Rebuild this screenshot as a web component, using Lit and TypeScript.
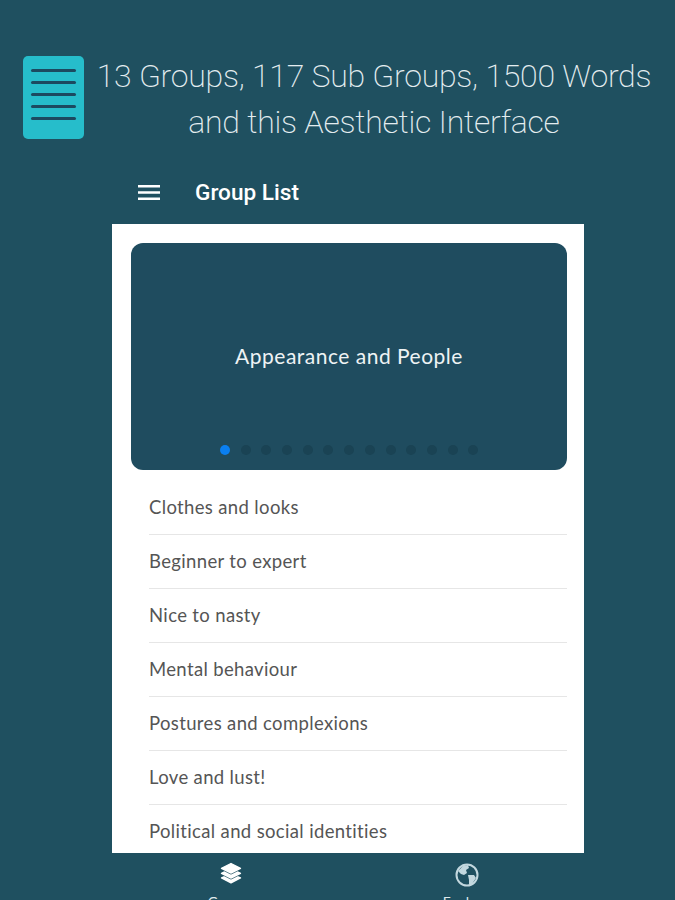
import { LitElement, html, css } from "lit";
import { customElement } from "lit/decorators.js";

const ROWS = [
  "Clothes and looks",
  "Beginner to expert",
  "Nice to nasty",
  "Mental behaviour",
  "Postures and complexions",
  "Love and lust!",
  "Political and social identities",
];

@customElement("app-root")
export class AppRoot extends LitElement {
  static styles = css`
    :host { display: block; }
    .page {
      height: 900px; overflow: hidden; background: #1f5060;
      display: flex; flex-direction: column;
    }
    .promo {
      display: flex; align-items: flex-start;
      padding: 53px 0 0 23px; height: 165px; box-sizing: border-box; flex: none;
    }
    .doc {
      width: 61px; height: 83px; margin-top: 3px; flex: none; border-radius: 5px;
      background: #26bdcb; display: flex; flex-direction: column; gap: 9px;
      padding: 13px 8px 0; box-sizing: border-box;
    }
    .doc i { display: block; height: 3px; background: #1c4a60; border-radius: 2px; }
    .headline {
      width: 580px; text-align: center; color: #e4edf0;
      font: 200 32px/46px Roboto, sans-serif; letter-spacing: -0.250px; margin: 0; flex: none;
    }
    .phone { margin-left: 112px; width: 472px; flex: none; }
    .bar {
      height: 59px; display: flex; align-items: center; color: #fff; box-sizing: border-box;
      padding: 0 0 4px 26px; gap: 35px;
    }
    .bar svg { width: 22px; height: 15px; flex: none; }
    .bar span { font: 500 22.600px Roboto, sans-serif; }
    .sheet {
      background: #fff; height: 629px; overflow: hidden; box-sizing: border-box;
      padding: 19px 17px 0 19px;
    }
    .card {
      height: 227px; border-radius: 12px; background: #1f4c5f; position: relative;
      display: flex; align-items: center; justify-content: center; padding-bottom: 2px; box-sizing: border-box;
    }
    .card-title { color: #eef3f4; font: 400 21px Lato, sans-serif; letter-spacing: 0.500px; }
    .dots { position: absolute; bottom: 15px; left: 89px; display: flex; gap: 10.700px; }
    .dots i { width: 10px; height: 10px; border-radius: 50%; background: #1a4354; display: block; }
    .dots i.on { background: #0a7ff0; }
    .rows { list-style: none; margin: 11px 0 0; padding: 0 0 0 18px; }
    .rows li {
      height: 54px; box-sizing: border-box; border-bottom: 1.500px solid #e6e6e6;
      display: flex; align-items: center; padding-bottom: 1px;
      font: 400 18.500px Lato, sans-serif; letter-spacing: 0.350px; color: #555;
    }
    .nav { display: flex; height: 47px; flex: none; }
    .tab { display: flex; flex-direction: column; align-items: center; width: 236px; flex: none; }
    .tab svg { width: 24px; height: 24px; flex: none; }
    .tab.layers svg { margin: 8px 0 0 2px; }
    .tab.globe svg { margin: 10px 0 0 2px; }
    .tab span { font: 400 14px Lato, sans-serif; color: #dfe9ec; flex: none; }
    .tab.layers span { margin-top: 8px; }
    .tab.globe span { margin-top: 6px; }
  `;

  render() {
    return html`<div class="page">
      <div class="promo">
        <div class="doc"><i></i><i></i><i></i><i></i><i></i></div>
        <p class="headline">13 Groups, 117 Sub Groups, 1500 Words<br />and this Aesthetic Interface</p>
      </div>
      <div class="phone">
        <div class="bar">
          <svg viewBox="0 0 22 15" aria-hidden="true">
            <path d="M0 1.300h22M0 7.500h22M0 13.700h22" stroke="#fff" stroke-width="2.400" fill="none" />
          </svg>
          <span>Group List</span>
        </div>
        <div class="sheet">
          <div class="card">
            <div class="card-title">Appearance and People</div>
            <div class="dots">
              ${Array.from({ length: 13 }, (_, i) => html`<i class=${i === 0 ? "on" : ""}></i>`)}
            </div>
          </div>
          <ul class="rows">
            ${ROWS.map((r) => html`<li>${r}</li>`)}
          </ul>
        </div>
        <div class="nav">
          <div class="tab layers">
            <svg viewBox="0 0 24 24" aria-hidden="true">
              <path fill="#fff" stroke="#fff" stroke-width="1.400" stroke-linejoin="round" d="M12 2.500 L21.500 7.300 12 12 2.500 7.300Z M5 11 L12 14.500 19 11 21.500 12.300 12 17 2.500 12.300Z M5 15.800 L12 19.300 19 15.800 21.500 17 12 21.800 2.500 17Z" />
            </svg>
            <span>Groups</span>
          </div>
          <div class="tab globe">
            <svg viewBox="0 0 24 24" aria-hidden="true">
              <circle cx="12" cy="12" r="10.500" fill="none" stroke="#c3d8df" stroke-width="2" />
              <path fill="#c3d8df" d="M3 8 L8 3 13 2 14 5 11 7 12 10 9 12 6 11Z M13 12 L19 12 21 15 17 21 14 22 14 17Z" />
            </svg>
            <span>Explore</span>
          </div>
        </div>
      </div>
    </div>`;
  }
}
